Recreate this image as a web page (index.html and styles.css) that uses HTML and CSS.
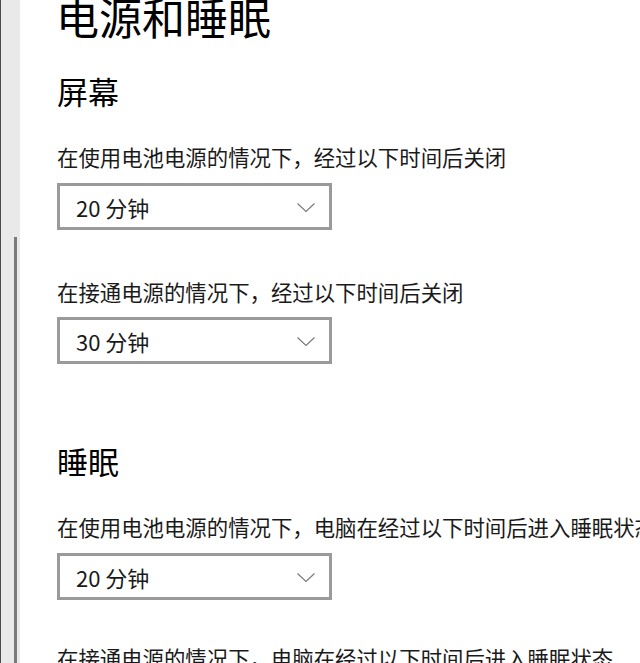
FILE: index.html
```html
<!DOCTYPE html>
<html lang="zh-CN">
<head>
<meta charset="utf-8">
<title>电源和睡眠</title>
<link rel="stylesheet" href="styles.css">
</head>
<body>
<div class="window">
  <div class="gutter"><div class="thumb"></div></div>
  <main class="content">
    <h1 class="title">电源和睡眠</h1>

    <h2 class="section s-screen">屏幕</h2>
    <p class="label l-first">在使用电池电源的情况下，经过以下时间后关闭</p>
    <div class="combo">
      <span class="value">20 分钟</span>
      <svg class="chev" width="20" height="11" viewBox="0 0 20 11"><path d="M1.5 1.5 L10 9.5 L18.5 1.5" fill="none" stroke="#777" stroke-width="1.1"/></svg>
    </div>

    <p class="label l-next">在接通电源的情况下，经过以下时间后关闭</p>
    <div class="combo c-tight">
      <span class="value">30 分钟</span>
      <svg class="chev" width="20" height="11" viewBox="0 0 20 11"><path d="M1.5 1.5 L10 9.5 L18.5 1.5" fill="none" stroke="#777" stroke-width="1.1"/></svg>
    </div>

    <h2 class="section s-sleep">睡眠</h2>
    <p class="label l-first">在使用电池电源的情况下，电脑在经过以下时间后进入睡眠状态</p>
    <div class="combo">
      <span class="value">20 分钟</span>
      <svg class="chev" width="20" height="11" viewBox="0 0 20 11"><path d="M1.5 1.5 L10 9.5 L18.5 1.5" fill="none" stroke="#777" stroke-width="1.1"/></svg>
    </div>

    <p class="label l-last">在接通电源的情况下，电脑在经过以下时间后进入睡眠状态</p>
  </main>
</div>
</body>
</html>
```
FILE: styles.css
```css
html, body {
  margin: 0;
  padding: 0;
  background: #ffffff;
  overflow: hidden;
}

body {
  font-family: "Noto Sans CJK SC", "Noto Sans", sans-serif;
  color: #000000;
}

.window {
  display: flex;
  width: 640px;
  height: 663px;
  overflow: hidden;
}

.gutter {
  position: relative;
  flex: 0 0 19px;
  background: #e9e9e9;
  border-left: 1px solid #4a4a4a;
}

.thumb {
  position: absolute;
  left: 13px;
  top: 237px;
  bottom: 0;
  width: 3px;
  background: #7a7a7a;
}

.content {
  flex: 1;
  padding-left: 36px;
  white-space: nowrap;
  min-width: 0;
}

.title {
  margin: 0;
  font-size: 43px;
  font-weight: 400;
  line-height: 32px;
  height: 32px;
}

.section {
  margin: 0 0 0 1px;
  font-size: 31px;
  font-weight: 400;
  line-height: 31px;
  height: 31px;
}

.s-screen { margin-top: 43px; }
.s-sleep { margin-top: 81px; }

.label {
  margin: 0 0 0 1px;
  font-size: 21.4px;
  line-height: 21px;
  height: 21px;
  color: #1a1a1a;
}

.l-first { margin-top: 40px; }
.l-next { margin-top: 51px; }
.l-last { margin-top: 47px; }

.combo {
  display: flex;
  align-items: center;
  justify-content: space-between;
  box-sizing: border-box;
  width: 275px;
  height: 47px;
  margin: 16px 0 0 1px;
  padding: 0 13px 0 16px;
  border: 3px solid #9a9a9a;
  background: #ffffff;
}

.c-tight { margin-top: 15px; }

.value {
  font-size: 22px;
  line-height: 22px;
  color: #1a1a1a;
}

.chev {
  display: block;
  margin-top: 1px;
}
```
